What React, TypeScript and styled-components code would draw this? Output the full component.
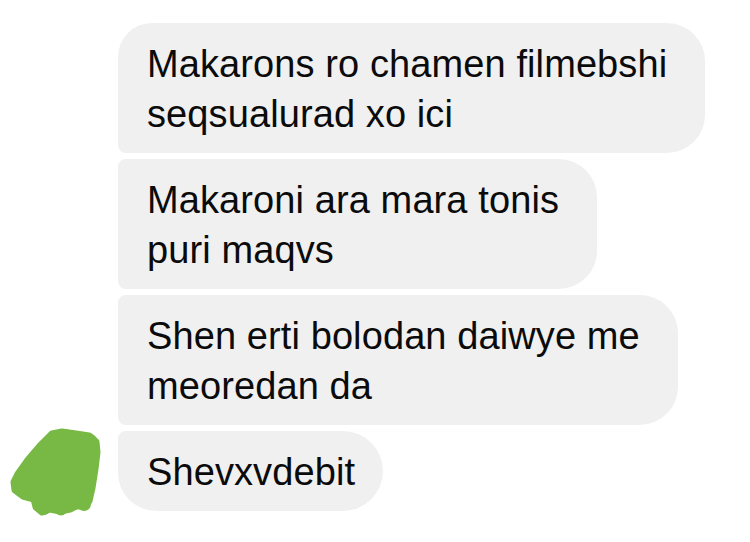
import React from "react";
import styled, { createGlobalStyle } from "styled-components";

const Global = createGlobalStyle`
  html, body { margin: 0; padding: 0; background: #ffffff; }
  body { font-family: "Liberation Sans", Arial, sans-serif; }
`;

const Page = styled.div`
  width: 750px;
  height: 542px;
  box-sizing: border-box;
  padding-top: 23px;
  background: #ffffff;
  overflow: hidden;
`;

const Thread = styled.div`
  display: flex;
  flex-direction: row;
  align-items: flex-end;
`;

const AvatarSlot = styled.div`
  width: 118px;
  flex: 0 0 118px;
  height: 94px;
  margin-bottom: -8px;
`;

const Stack = styled.div`
  display: flex;
  flex-direction: column;
  align-items: flex-start;
  gap: 6px;
`;

type Pos = "first" | "middle" | "last";

const Bubble = styled.div<{ $pos: Pos; $wrapped?: boolean }>`
  box-sizing: border-box;
  background: #f0f0f0;
  color: #0b0b0b;
  font-family: "Liberation Sans", Arial, sans-serif;
  font-size: 38px;
  letter-spacing: 0.1px;
  line-height: 50px;
  padding: 16px ${(p) => (p.$wrapped ? 38 : 28)}px 14px 29px;
  border-radius: ${(p) =>
    p.$pos === "first"
      ? "34px 38px 38px 8px"
      : p.$pos === "last"
      ? "8px 40px 40px 38px"
      : "8px 38px 38px 8px"};
`;

const Line = styled.span`
  display: block;
  white-space: nowrap;
`;

const Avatar = () => (
  <svg width="118" height="94" viewBox="0 0 118 94">
    <g fill="#77b944">
      <polygon
        points="52,9 62,7 76,9 89,11 96,17 97,27 95,44 92,63 89,76 84,81 76,81 70,84 60,86 50,84 42,87 36,82 34,74 23,71 15,65 14,57 18,49 28,35 40,21"
        stroke="#77b944"
        strokeWidth="7"
        strokeLinejoin="round"
      />
      <circle cx="64" cy="12" r="8" />
      <circle cx="88" cy="18" r="10" />
      <circle cx="44" cy="84" r="6" />
      <circle cx="61" cy="84" r="6.5" />
      <circle cx="84" cy="79" r="7" />
    </g>
  </svg>
);

const messages: { lines: string[]; pos: Pos }[] = [
  { lines: ["Makarons ro chamen filmebshi", "seqsualurad xo ici"], pos: "first" },
  { lines: ["Makaroni ara mara tonis", "puri maqvs"], pos: "middle" },
  { lines: ["Shen erti bolodan daiwye me", "meoredan da"], pos: "middle" },
  { lines: ["Shevxvdebit"], pos: "last" },
];

export default function App() {
  return (
    <>
      <Global />
      <Page>
        <Thread>
          <AvatarSlot>
            <Avatar />
          </AvatarSlot>
          <Stack>
            {messages.map((m, i) => (
              <Bubble key={i} $pos={m.pos} $wrapped={m.lines.length > 1}>
                {m.lines.map((l, j) => (
                  <Line key={j}>{l}</Line>
                ))}
              </Bubble>
            ))}
          </Stack>
        </Thread>
      </Page>
    </>
  );
}
